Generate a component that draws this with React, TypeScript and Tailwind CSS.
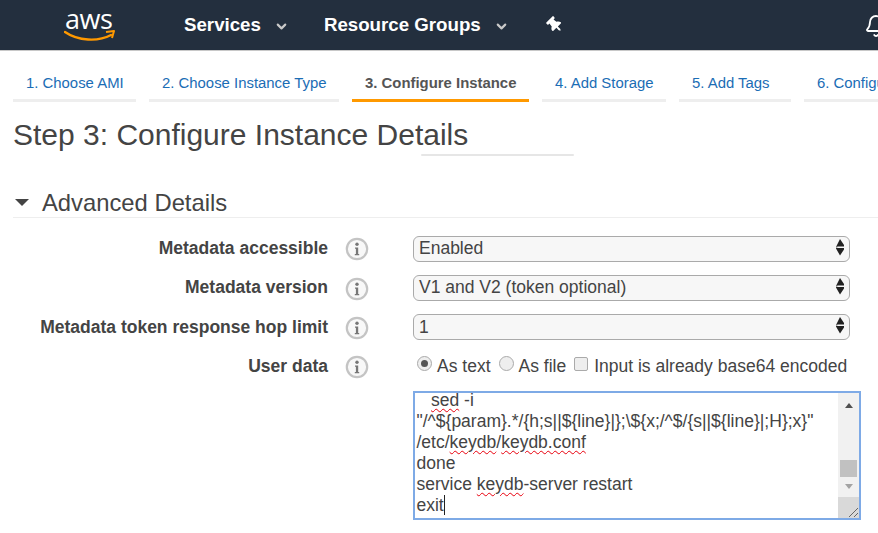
import { Bell, ChevronDown } from "lucide-react";
import { FaThumbtack } from "react-icons/fa";

const TABS = [
  { label: "1. Choose AMI", width: "w-[123px]" },
  { label: "2. Choose Instance Type", width: "w-[190px]" },
  { label: "3. Configure Instance", width: "w-[177px]", active: true },
  { label: "4. Add Storage", width: "w-[124px]" },
  { label: "5. Add Tags", width: "w-[112px]" },
  { label: "6. Configure Security Group", width: "w-[220px]" },
];

function InfoIcon() {
  return (
    <svg width="24" height="24" viewBox="0 0 24 24" className="-ml-px mt-[1px] block">
      <circle cx="12" cy="12" r="10.2" fill="#f8f8f8" stroke="#c4c4c4" strokeWidth="2.2" />
      <circle cx="12" cy="7.2" r="1.7" fill="#777" />
      <path d="M10 10.5 H13.2 V17 H14.2 V18.2 H9.8 V17 H10.9 V11.7 H10 Z" fill="#777" />
    </svg>
  );
}

function SelectArrows() {
  return (
    <svg width="10" height="17" viewBox="0 0 10 17" className="absolute right-[4px] top-[2px]">
      <path d="M5 0 L9 6 V7.5 H3 L1 8 Z M1 8.5 L3 9 H9 V10.5 L5 16.5 L1 9.5 Z" fill="#222" />
    </svg>
  );
}

function SelectBox({ value, leading = "leading-[22px]" }: { value: string; leading?: string }) {
  return (
    <div className={`relative h-[26px] w-[437px] rounded-[6px] border border-[#aaa] bg-[#f7f7f7] pl-[5px] text-[17.5px] text-[#444] ${leading}`}>
      {value}
      <SelectArrows />
    </div>
  );
}

function Row({
  label,
  labelNudge = "-translate-y-px",
  children,
}: {
  label: string;
  labelNudge?: string;
  children: React.ReactNode;
}) {
  return (
    <div className="flex h-[26px] items-center">
      <div className={`w-[328px] text-right text-[17.5px] font-bold text-[#444] ${labelNudge}`}>{label}</div>
      <div className="ml-[18px] w-[67px]">
        <InfoIcon />
      </div>
      {children}
    </div>
  );
}

function Spell({ children }: { children: React.ReactNode }) {
  return <span className="underline decoration-[#e8000c] decoration-wavy decoration-1 underline-offset-2">{children}</span>;
}

export default function App() {
  return (
    <div className="h-[533px] w-[878px] overflow-hidden bg-white font-['Liberation_Sans',Arial,sans-serif]">
      {/* top nav */}
      <header className="flex h-[51px] items-center overflow-hidden whitespace-nowrap border-b border-[#c8c8c8] bg-[#232f3e] text-white">
        <div className="relative ml-[64px] h-[44px] w-[52px] shrink-0">
          <span className="absolute left-[1px] top-[-1px] font-['Open_Sans',sans-serif] text-[27px] leading-[34px] tracking-[-0.5px]">aws</span>
          <svg width="52" height="14" viewBox="0 0 52 14" className="absolute left-0 top-[27px]">
            <path d="M1 2 C14 11 34 12 47 5" fill="none" stroke="#f90" strokeWidth="2.4" strokeLinecap="round" />
            <path d="M42 2 L50 1 L48 8" fill="none" stroke="#f90" strokeWidth="2" strokeLinejoin="round" />
          </svg>
        </div>
        <span className="ml-[68px] shrink-0 text-[18.7px] font-bold">Services</span>
        <ChevronDown size={15} strokeWidth={3.4} className="ml-[13px] mt-[3px] shrink-0 text-[#c9c9c9]" />
        <span className="ml-[35px] shrink-0 text-[18.7px] font-bold">Resource Groups</span>
        <ChevronDown size={15} strokeWidth={3.4} className="ml-[13px] mt-[3px] shrink-0 text-[#c9c9c9]" />
        <FaThumbtack size={16} className="ml-[38px] shrink-0 -rotate-45 text-white" />
        <Bell size={24} strokeWidth={1.8} className="ml-[301px] mt-[2px] shrink-0" />
      </header>

      {/* wizard steps */}
      <nav className="ml-[13px] mt-[22px] flex gap-[13px] whitespace-nowrap">
        {TABS.map((tab) => (
          <div
            key={tab.label}
            className={`h-[29px] shrink-0 overflow-hidden border-b-[3px] pl-[13px] text-[14.9px] leading-[20px] ${tab.width} ${
              tab.active ? "border-[#f90] font-bold text-[#555]" : "border-[#eee] text-[#1b6db5]"
            }`}
          >
            {tab.label}
          </div>
        ))}
      </nav>

      <h1 className="ml-[13px] mt-[15px] h-[36px] text-[30px] leading-[36px] text-[#444]">Step 3: Configure Instance Details</h1>
      <div className="ml-[421px] mt-[1px] h-[2px] w-[153px] rounded-[1px] bg-[#e6e6e6]" />

      {/* advanced section */}
      <div className="ml-[13px] mt-[32px] flex h-[30px] items-center border-b border-[#eee] text-[#444]">
        <span className="ml-[2px] h-0 w-0 border-x-[7px] border-t-[7px] border-x-transparent border-t-[#444]" />
        <span className="ml-[13px] text-[23.8px] leading-[28px]">Advanced Details</span>
      </div>

      <div className="mt-[17.7px] flex flex-col gap-[13.33px]">
        <Row label="Metadata accessible">
          <SelectBox value="Enabled" />
        </Row>
        <Row label="Metadata version">
          <SelectBox value="V1 and V2 (token optional)" />
        </Row>
        <Row label="Metadata token response hop limit" labelNudge="translate-y-0">
          <SelectBox value="1" leading="leading-[24px]" />
        </Row>
        <Row label="User data">
          <div className="flex -translate-y-px items-center text-[17.5px] text-[#444]">
            <span className="ml-[4px] flex h-[15px] w-[15px] -translate-y-[2px] items-center justify-center rounded-full border border-[#aaa] bg-[#eee]">
              <span className="h-[7px] w-[7px] rounded-full bg-[#555]" />
            </span>
            <span className="ml-[5px]">As text</span>
            <span className="ml-[8px] h-[15px] w-[15px] -translate-y-[2px] rounded-full border border-[#aaa] bg-[#eee]" />
            <span className="ml-[5px]">As file</span>
            <span className="ml-[8px] h-[14px] w-[14px] -translate-y-[2px] rounded-[2px] border border-[#aaa] bg-[#eee]" />
            <span className="ml-[6px] whitespace-nowrap">Input is already base64 encoded</span>
          </div>
        </Row>
      </div>

      {/* user data textarea */}
      <div className="relative ml-[413px] mt-[11.3px] flex h-[129px] w-[448px] overflow-hidden border-2 border-[#7eaae6] text-[17.5px] leading-[21px] text-[#444]">
        <div className="h-full flex-1 overflow-hidden whitespace-nowrap pl-[1.5px]">
          <div className="-mt-[3px]">
            <span className="ml-[14.5px]"><Spell>sed</Spell> -i</span>
          </div>
          <div>"/^${"{"}param{"}"}.*/{"{"}h;s||${"{"}line{"}"}|{"}"};\${"{"}x;/^$/{"{"}s||${"{"}line{"}"}|;H{"}"};x{"}"}"</div>
          <div>/etc/<Spell>keydb</Spell>/<Spell>keydb.conf</Spell></div>
          <div>done</div>
          <div>service <Spell>keydb</Spell>-server restart</div>
          <div className="flex items-center">exit<span className="inline-block h-[20px] w-px bg-[#222]" /></div>
        </div>
        <div className="flex h-full w-[21px] flex-col items-center bg-[#f1f1f1]">
          <span className="mt-[10px] h-0 w-0 border-x-[4.5px] border-b-[5px] border-x-transparent border-b-[#505050]" />
          <span className="mt-[52px] h-[17px] w-[17px] bg-[#c1c1c1]" />
          <span className="mt-[7px] h-0 w-0 border-x-[4.5px] border-t-[5px] border-x-transparent border-t-[#a3a3a3]" />
          <div className="relative mt-auto h-[21px] w-[21px] bg-[#d9d9d9]">
            <svg width="12" height="12" viewBox="0 0 12 12" className="absolute bottom-0 right-0">
              <path d="M11 2 L2 11 M11 7 L7 11" stroke="#666" strokeWidth="1" />
            </svg>
          </div>
        </div>
      </div>
    </div>
  );
}
